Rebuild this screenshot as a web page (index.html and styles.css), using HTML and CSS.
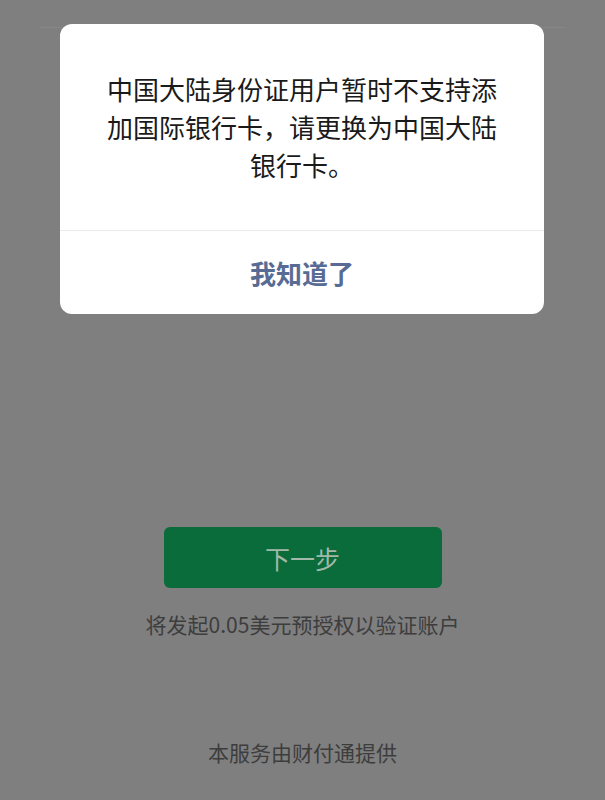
FILE: index.html
```html
<!DOCTYPE html>
<html lang="zh-CN">
<head>
    <meta charset="UTF-8">
    <meta name="viewport" content="width=device-width, initial-scale=1.0">
    <title>添加银行卡</title>
    <link rel="stylesheet" href="styles.css">
</head>
<body>
    <div class="page">
        <div class="header"></div>
        <div class="main">
            <button class="next-btn">下一步</button>
            <p class="hint">将发起0.05美元预授权以验证账户</p>
        </div>
        <div class="footer">本服务由财付通提供</div>
    </div>

    <div class="dialog">
        <div class="dialog-body">中国大陆身份证用户暂时不支持添加国际银行卡，请更换为中国大陆银行卡。</div>
        <div class="dialog-actions">
            <button class="dialog-btn">我知道了</button>
        </div>
    </div>
</body>
</html>
```

FILE: styles.css
```css
body {
    margin: 0;
    background-color: #7f7f7f;
    font-family: "Noto Sans CJK SC", "Noto Sans", sans-serif;
}

.page {
    display: flex;
    flex-direction: column;
    align-items: center;
    height: 800px;
}

.header {
    align-self: stretch;
    height: 27px;
    margin: 0 40px;
    border-bottom: 1px solid #878787;
}

.main {
    display: flex;
    flex-direction: column;
    align-items: center;
    padding-top: 499px;
}

.next-btn {
    width: 278px;
    height: 61px;
    border: none;
    border-radius: 6px;
    background-color: #096c3a;
    color: #a2b9a9;
    font-family: inherit;
    font-size: 25px;
    padding: 0;
}

.hint {
    margin: 21px 0 0;
    font-size: 21px;
    line-height: 30px;
    color: #3d3d3d;
}

.footer {
    margin-top: auto;
    margin-bottom: 33px;
    font-size: 21px;
    line-height: 30px;
    color: #3d3d3d;
}

.dialog {
    position: absolute;
    top: 24px;
    left: 60px;
    width: 484px;
    background-color: #fff;
    border-radius: 12px;
    overflow: hidden;
}

.dialog-body {
    padding: 46px 46px 46px;
    text-align: center;
    font-size: 26px;
    line-height: 38px;
    color: #1a1a1a;
}

.dialog-actions {
    border-top: 1px solid #ececec;
}

.dialog-btn {
    display: block;
    width: 100%;
    height: 83px;
    border: none;
    background: none;
    font-family: inherit;
    font-size: 26px;
    font-weight: bold;
    color: #576b95;
    padding: 0;
}
```
